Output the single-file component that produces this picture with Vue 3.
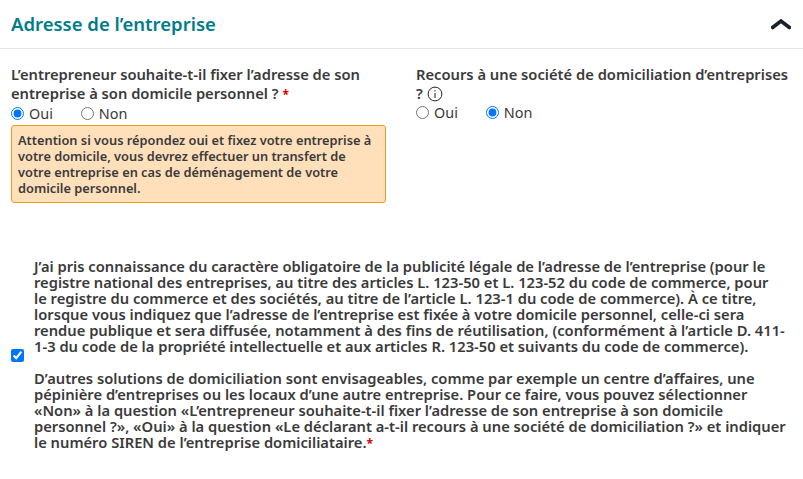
<script setup>
const answers = [
  { name: 'dom', oui: true },
  { name: 'soc', oui: false },
]
</script>

<template>
  <div class="page">
    <header class="head">
      <h2 class="title">Adresse de l’entreprise</h2>
      <svg class="chev" width="20" height="12" viewBox="0 0 20 12">
        <path d="M1.6 9.5 L10 3 L18.4 9.5" fill="none" stroke="#17202c" stroke-width="3.6" stroke-linecap="round" stroke-linejoin="miter" />
      </svg>
    </header>

    <section class="cols">
      <div class="col">
        <div class="q">L’entrepreneur souhaite-t-il fixer l’adresse de son entreprise à son domicile personnel ? <span class="req">*</span></div>
        <div class="radios">
          <label class="r"><input type="radio" :name="answers[0].name" :checked="answers[0].oui" />Oui</label>
          <label class="r"><input type="radio" :name="answers[0].name" :checked="!answers[0].oui" />Non</label>
        </div>
        <div class="alert">Attention si vous répondez oui et fixez votre entreprise à votre domicile, vous devrez effectuer un transfert de votre entreprise en cas de déménagement de votre domicile personnel.</div>
      </div>
      <div class="col">
        <div class="q">Recours à une société de domiciliation d’entreprises ?
          <svg class="info" width="16" height="16" viewBox="0 0 16 16">
            <circle cx="8" cy="8" r="6.9" fill="none" stroke="#222" stroke-width="1" />
            <path d="M8 7v5M8 4.2v1.4" stroke="#222" stroke-width="1" fill="none" />
          </svg>
        </div>
        <div class="radios">
          <label class="r"><input type="radio" :name="answers[1].name" :checked="answers[1].oui" />Oui</label>
          <label class="r"><input type="radio" :name="answers[1].name" :checked="!answers[1].oui" />Non</label>
        </div>
      </div>
    </section>

    <section class="consent">
      <input class="check" type="checkbox" checked />
      <div class="legal">
        <p>J’ai pris connaissance du caractère obligatoire de la publicité légale de l’adresse de l’entreprise (pour le registre national des entreprises, au titre des articles L. 123-50 et L. 123-52 du code de commerce, pour<br />le registre du commerce et des sociétés, au titre de l’article L. 123-1 du code de commerce). À ce titre, lorsque vous indiquez que l’adresse de l’entreprise est fixée à votre domicile personnel, celle-ci sera rendue publique et sera diffusée, notamment à des fins de réutilisation, (conformément à l’article D. 411-1-3 du code de la propriété intellectuelle et aux articles R. 123-50 et suivants du code de commerce).</p>
        <p>D’autres solutions de domiciliation sont envisageables, comme par exemple un centre d’affaires, une pépinière d’entreprises ou les locaux d’une autre entreprise. Pour ce faire, vous pouvez sélectionner «Non» à la question «L’entrepreneur souhaite-t-il fixer l’adresse de son entreprise à son domicile personnel ?», «Oui» à la question «Le déclarant a-t-il recours à une société de domiciliation ?» et indiquer le numéro SIREN de l’entreprise domiciliataire.<span class="req">*</span></p>
      </div>
    </section>
  </div>
</template>

<style scoped>
.page {
  width: 803px;
  height: 479px;
  overflow: hidden;
  background: #fff;
  font-family: "Noto Sans", sans-serif;
  color: #3a3a3a;
}
.head {
  height: 47px;
  padding: 0 12px 1px 11px;
  border-bottom: 1px solid #e6e6e6;
  display: flex;
  align-items: center;
  justify-content: space-between;
}
.title {
  margin: 0;
  font-size: 18.5px;
  font-weight: 600;
  color: #007d8a;
}
.cols {
  display: grid;
  grid-template-columns: 375px 375px;
  column-gap: 30px;
  padding: 16px 11px 0;
}
.q {
  font-size: 14.72px;
  font-weight: 600;
  line-height: 19px;
}
.req { color: #d00; font-size: 12px; font-weight: 700; }
.info { vertical-align: -3px; }
.radios {
  display: flex;
  gap: 28px;
  height: 19px;
  align-items: center;
  font-size: 14.4px;
}
.r {
  display: flex;
  align-items: center;
  gap: 5px;
}
.r input { margin: 0; width: 13px; height: 13px; }
.alert {
  margin-top: 2px;
  box-sizing: border-box;
  height: 78px;
  padding: 6px 6px;
  background: #ffe0bb;
  border: 1px solid #ee9a2b;
  border-radius: 3px;
  font-size: 12.8px;
  font-weight: 600;
  line-height: 16px;
}
.consent {
  display: flex;
  align-items: center;
  gap: 10px;
  padding: 55px 11px 0;
}
.check { margin: 0; width: 13px; height: 13px; flex: none; }
.legal { font-size: 14.72px; font-weight: 600; line-height: 16px; }
.legal p { margin: 0 0 16px; }
.legal p:last-child { margin: 0; }
</style>
